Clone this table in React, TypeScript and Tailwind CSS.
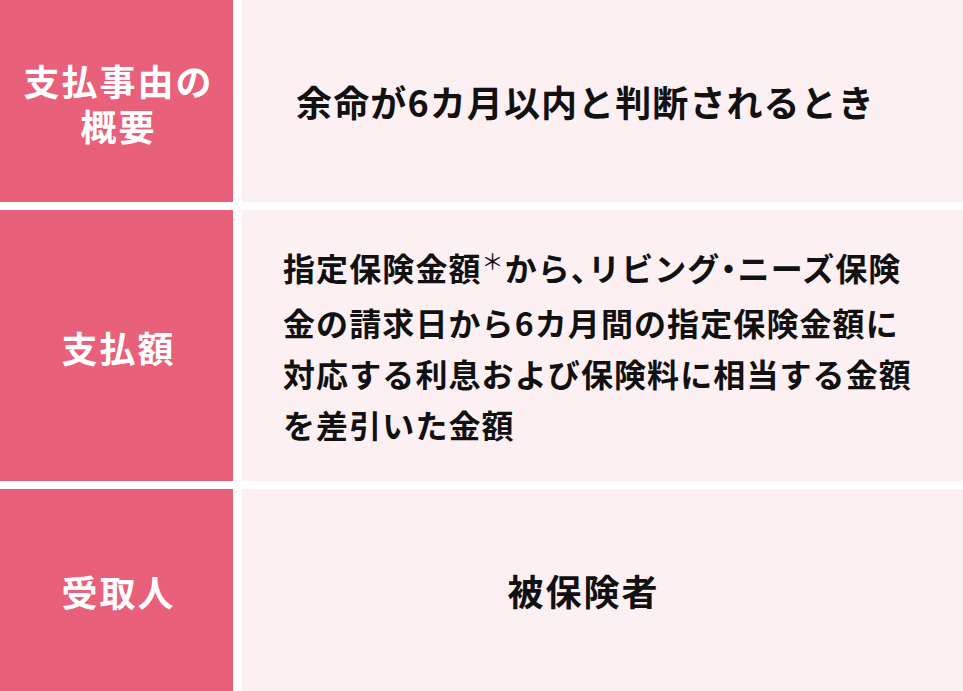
const JP = { fontFamily: '"Noto Sans CJK JP", "Noto Sans", sans-serif' };

const Label = ({ lines }: { lines: string[] }) => (
  <div className="bg-[#e8607a] flex items-center justify-center text-center text-white font-bold text-[36px] leading-[45px] tracking-[2px] pt-[3px] pl-[4px]">
    <p>
      {lines.map((l, i) => (
        <span key={l}>
          {i > 0 && <br />}
          {l}
        </span>
      ))}
    </p>
  </div>
);

// half-width punctuation, like the reference
const Punct = ({ c }: { c: string }) => (
  <span style={{ fontFeatureSettings: '"palt"' }}>{c}</span>
);

export default function App() {
  return (
    <div className="w-[963px] h-[691px] bg-white" style={JP}>
      <div className="grid grid-cols-[233px_1fr] grid-rows-[202px_271px_202px] gap-x-[9px] gap-y-[8px]">
        <Label lines={["支払事由の", "概要"]} />
        <div className="bg-[#fdf0f3] flex items-center justify-center pr-[34px] text-[#111] font-bold text-[36px] tracking-[1.1px]">
          余命が6カ月以内と判断されるとき
        </div>

        <Label lines={["支払額"]} />
        <div className="bg-[#fdf0f3] flex items-center pl-[41px] text-[#111] font-bold text-[32px] leading-[51px] tracking-[1.1px] whitespace-nowrap">
          <div>
            <div>
              指定保険金額
              <span className="relative -top-[12px] text-[22px] font-normal">＊</span>
              から<Punct c="、" />リビング<Punct c="・" />ニーズ保険
            </div>
            <div>金の請求日から6カ月間の指定保険金額に</div>
            <div>対応する利息および保険料に相当する金額</div>
            <div>を差引いた金額</div>
          </div>
        </div>

        <Label lines={["受取人"]} />
        <div className="bg-[#fdf0f3] flex items-center justify-center pr-[38px] text-[#111] font-bold text-[36px] tracking-[2px]">
          被保険者
        </div>
      </div>
    </div>
  );
}
